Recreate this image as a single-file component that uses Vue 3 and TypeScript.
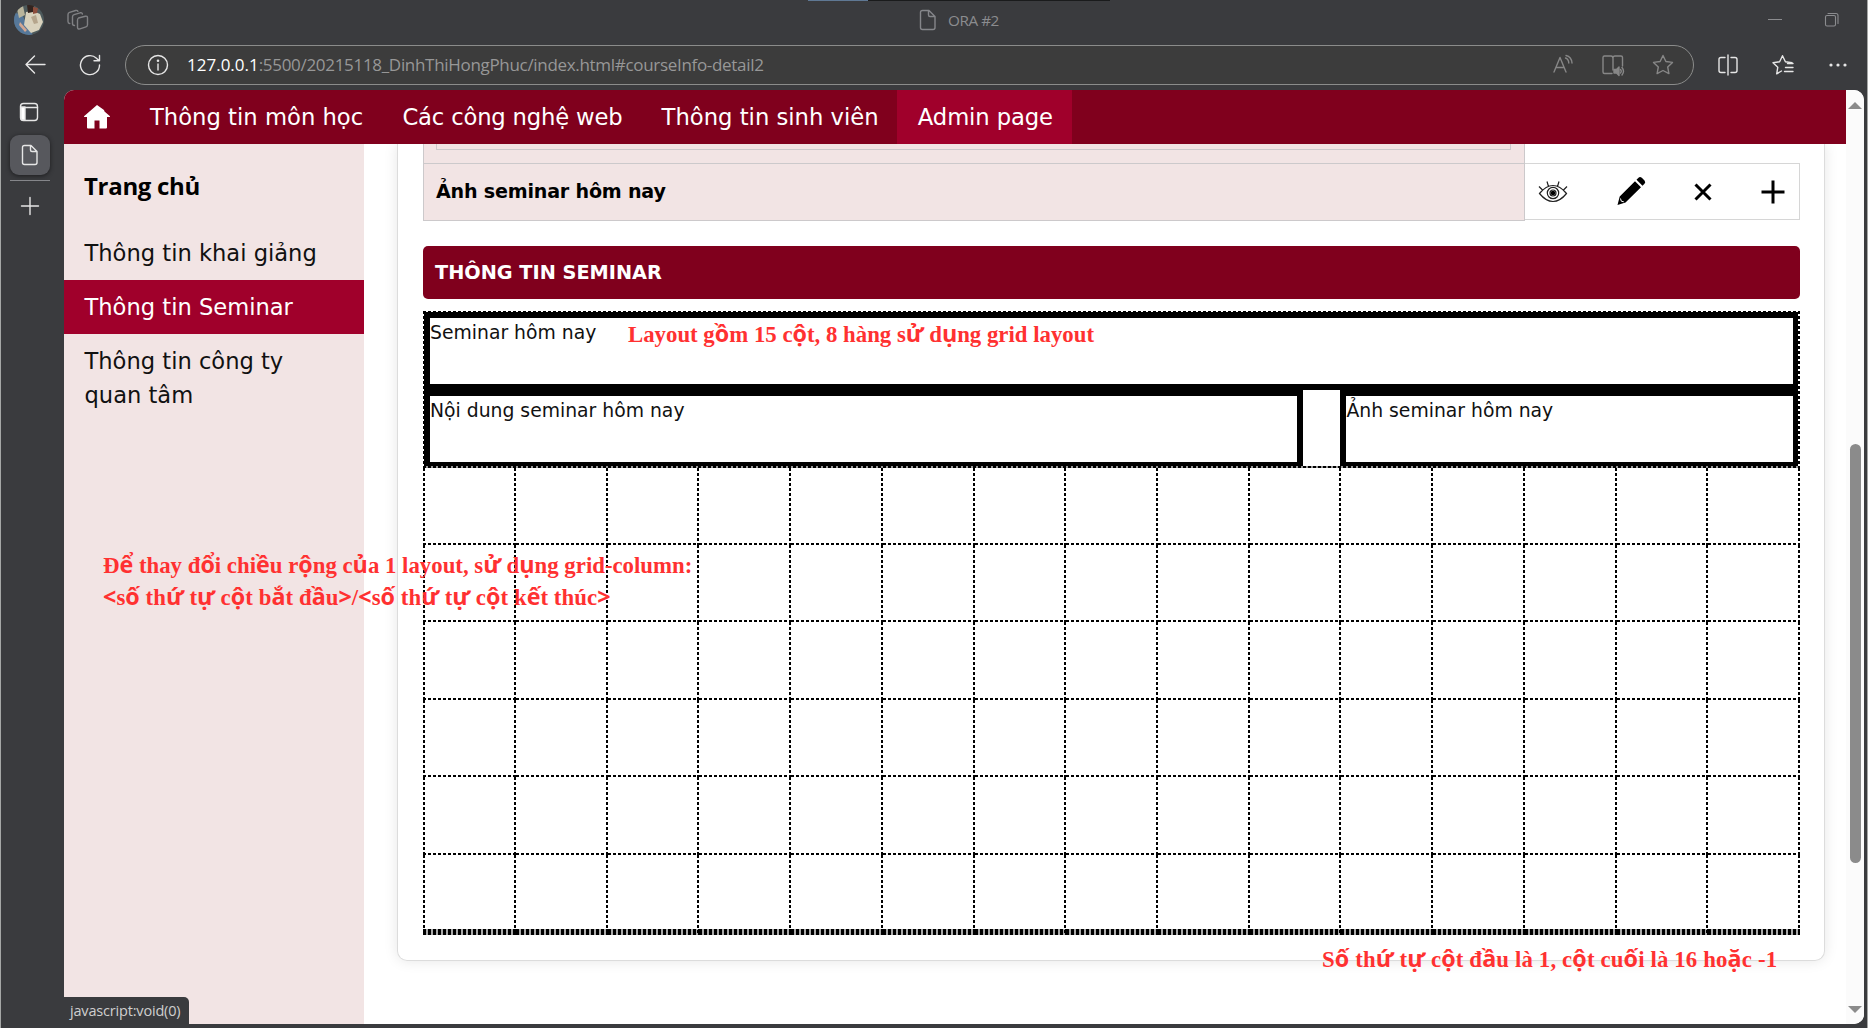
<script setup lang="ts">
interface Run {
  text: string
  plain: boolean
}

const navItems: string[] = ['Thông tin môn học', 'Các công nghệ web', 'Thông tin sinh viên', 'Admin page']
const sideItems: string[] = ['Thông tin khai giảng', 'Thông tin Seminar', 'Thông tin công ty quan tâm']

// Stacked Vietnamese diacritics are set in the sans face, the rest in the serif face.
function runs(line: string): Run[] {
  return line
    .split(/([<>\u01a0-\u01b0\u1ea0-\u1ef9]+)/)
    .filter((t) => t.length > 0)
    .map((text) => ({ text, plain: /[<>\u01a0-\u01b0\u1ea0-\u1ef9]/.test(text) }))
}

const notes = [
  { cls: 'note-a', lines: ['Layout gồm 15 cột, 8 hàng sử dụng grid layout'].map(runs) },
  {
    cls: 'note-b',
    lines: [
      'Để thay đổi chiều rộng của 1 layout, sử dụng grid-column:',
      '<số thứ tự cột bắt đầu>/<số thứ tự cột kết thúc>',
    ].map(runs),
  },
  { cls: 'note-c', lines: ['Số thứ tự cột đầu là 1, cột cuối là 16 hoặc -1'].map(runs) },
]
</script>

<template>
  <div class="window">
    <header class="titlebar">
      <svg class="avatar" viewBox="0 0 30 30">
        <defs><clipPath id="face"><circle cx="15" cy="15" r="15" /></clipPath></defs>
        <g clip-path="url(#face)">
          <rect width="30" height="30" fill="#4d5a5c" />
          <path d="M0 8l8 1 4 9 7 12H3L0 22z" fill="#56789a" />
          <path d="M3 4l6-3 2 9-6 3z" fill="#b9b59c" />
          <path d="M12 7l7-1 7 3 3 8-4 8-8 3-7-8z" fill="#d9d2bd" />
          <path d="M13 0h7l-1 7-5 1z" fill="#33241f" />
          <path d="M19 2l5 1-1 5-4 1z" fill="#8d4d3c" />
          <path d="M6 17l7 8-2 2-6-7z" fill="#d3a792" />
          <path d="M17 12l3 7 4-1-2-8z" fill="#b5a58c" />
        </g>
      </svg>
      <svg class="ic workspaces" viewBox="0 0 24 24">
        <path d="M12.500 10l6.800-1.800q2.200-.4 2.200 1.500v7q0 1.700-1.500 2.200l-6 2q-2.500.6-2.500-1.600v-7q0-1.700 1-2.300zM8.500 17.500q-2-.1-2-2V8.800q0-1.700 1.600-2.200l6-1.800q2-.4 2.300 1.200M3.800 15.500Q2 15.300 2 13.500V6.500q0-1.700 1.600-2.200l6-1.800q1.900-.4 2.300.9" />
      </svg>
      <svg class="ic title-doc" viewBox="0 0 24 24">
        <path d="M6.500 2.500h6.500l6 6V19.500q0 2-2 2H6.500q-2 0-2-2v-15q0-2 2-2zM12.500 2.500v4.500q0 1.500 1.500 1.500h5" />
      </svg>
      <span class="title">ORA #2</span>
      <svg class="ic minimize" viewBox="0 0 24 24"><path d="M5 11.500h14" /></svg>
      <svg class="ic restore" viewBox="0 0 24 24">
        <rect x="5.500" y="7.500" width="10" height="10.500" rx="1.500" />
        <path d="M8 5.500h8q2 0 2 2v8" />
      </svg>
    </header>
    <i class="strip"></i>

    <div class="toolbar">
      <svg class="ic back" viewBox="0 0 24 24"><path d="M22 11.500H3M11.500 3L3 11.500l8.500 8.500" /></svg>
      <svg class="ic reload" viewBox="0 0 24 24"><path d="M21.500 12a9.500 9.500 0 1 1-3-6.800l2.500 2.500M21.500 2.500v5.300h-5.500" /></svg>
      <div class="pill">
        <svg class="ic info" viewBox="0 0 24 24">
          <circle cx="12" cy="12" r="9.500" /><path d="M12 11v6" /><circle cx="12" cy="7.800" r=".6" />
        </svg>
        <span class="url"><b>127.0.0.1</b>:5500/20215118_DinhThiHongPhuc/index.html#courseInfo-detail2</span>
        <svg class="ic dim" viewBox="0 0 24 24">
          <path d="M3 19L9 4.500 15 19M5 14.500h8M14.500 5q3 1 3.300 5M15 2.500q5.500 1.300 6 7.500" />
        </svg>
        <svg class="ic dim gap" viewBox="0 0 24 24">
          <path d="M11 20.500H3.500q-1.500 0-1.500-1.500V4.500q0-1.500 1.500-1.500H10q2 0 2 2.500V17M12 5q0-2 2-2h6q1.500 0 1.500 1.500V13" />
          <path d="M13 16.500h2.500L18 14v8.500L15.500 20H13z" fill="#878787" />
          <path d="M19.500 16.500q1.500 1.700 0 3.500M21 14.500q3 3.700 0 7.500" />
        </svg>
        <svg class="ic dim gap" viewBox="0 0 24 24">
          <path d="M12 2.500l2.900 6 6.600.9-4.800 4.600 1.200 6.600L12 17.500l-5.900 3.100 1.200-6.600-4.800-4.600 6.600-.9z" />
        </svg>
      </div>
      <svg class="ic split" viewBox="0 0 24 24">
        <path d="M9 4.500H5q-2 0-2 2v11q0 2 2 2h4M15 4.500h4q2 0 2 2v11q0 2-2 2h-4M12 2v20" />
      </svg>
      <svg class="ic favs" viewBox="0 0 24 24">
        <path d="M10.500 18l-4.800 2.800 1.100-6.600L2 9.700l6.600-1L11.500 2.700l2.900 6 6.600 1M16.500 10.500h5.500M14.500 14.500h7.500M13.500 18.500h8.500" />
      </svg>
      <svg class="ic more" viewBox="0 0 24 24">
        <g fill="#e6e6e6" stroke="none"><circle cx="5" cy="12" r="1.600" /><circle cx="12" cy="12" r="1.600" /><circle cx="19" cy="12" r="1.600" /></g>
      </svg>
    </div>

    <div class="body">
      <aside class="tabs">
        <svg class="ic tab-icon" viewBox="0 0 24 24">
          <rect x="3.500" y="3.500" width="17" height="17" rx="3" /><path d="M8 7.500h12.500" /><path d="M4 7h4v13H5.500Q4 20 4 18z" fill="#fff" />
        </svg>
        <div class="active-tab">
          <svg class="ic" viewBox="0 0 24 24">
            <path d="M6.500 2.500h6.500l6 6V19.500q0 2-2 2H6.500q-2 0-2-2v-15q0-2 2-2zM12.500 2.500v4.500q0 1.500 1.500 1.500h5" />
          </svg>
        </div>
        <hr />
        <svg class="ic plus-tab" viewBox="0 0 24 24"><path d="M12 3.500v17M3.500 12h17" /></svg>
      </aside>

      <div class="page">
        <div class="site">
          <nav>
            <svg class="home" viewBox="0 0 26 24">
              <path d="M13 0L0 11.300q-.3.700.5.700H3v10.500Q3 23.500 4 23.500h6.500v-8h5v8H22q1 0 1-1V12h2.500q.8 0 .5-.7L20.500 6.400 20 5z" fill="#fff" />
            </svg>
            <a v-for="(n, i) in navItems" :key="n" :class="{ on: i === 3, tight: i === 1 }">{{ n }}</a>
          </nav>
          <div class="columns">
            <aside class="side">
              <h2>Trang chủ</h2>
              <a v-for="(s, i) in sideItems" :key="s" :class="{ on: i === 1 }">{{ s }}</a>
            </aside>
            <main>
              <section class="card">
                <div class="prev"><div class="prev-box"></div></div>
                <div class="row">
                  <div class="label">Ảnh seminar hôm nay</div>
                  <div class="actions">
                    <svg class="eye" viewBox="0 0 30 24">
                      <g fill="none" stroke="#222" stroke-width="1.200">
                        <path d="M1.500 13.500Q8 5.500 15 5.500t13.500 8Q22 21.500 15 21.500T1.500 13.500zM4.500 10L1 6.500M10.500 6.500L9 1.500M19.500 6.500L21 1.500M25.500 10L29 6.500" />
                        <circle cx="15" cy="13" r="5.700" /><circle cx="15" cy="13" r="3" />
                      </g>
                      <circle cx="15" cy="13" r="2.300" />
                    </svg>
                    <svg class="pencil" viewBox="0 0 30 30">
                      <path d="M19 5.200l6 6L9.500 26.500l-8 2.500 2.200-8.500zM20.500 3.700l2-2q1.500-1.500 3.300.1l2.700 2.700q1.500 1.700 0 3.200l-2 2z" />
                      <path d="M4.500 22.500l.8 2.700 2.500.6" fill="none" stroke="#fff" stroke-width="1" />
                    </svg>
                    <svg class="cross" viewBox="0 0 20 20"><path d="M2.500 2.500l15 15M17.500 2.500l-15 15" /></svg>
                    <svg class="add" viewBox="0 0 24 24"><path d="M12 .5v23M.5 12h23" /></svg>
                  </div>
                </div>
                <h3>THÔNG TIN SEMINAR</h3>
                <div class="grid">
                  <div class="box top">Seminar hôm nay</div>
                  <div class="box content">Nội dung seminar hôm nay</div>
                  <div class="box image">Ảnh seminar hôm nay</div>
                  <div v-for="c in 90" :key="c" class="cell" :class="{ first: c % 15 === 1, last: c > 75 }"></div>
                </div>
              </section>
            </main>
          </div>
        </div>
        <div class="scroll">
          <i class="up"></i>
          <div class="track"><i class="thumb"></i></div>
          <i class="down"></i>
        </div>
        <div class="status">javascript:void(0)</div>
      </div>
    </div>

    <div v-for="n in notes" :key="n.cls" class="note" :class="n.cls">
      <div v-for="(l, i) in n.lines" :key="i"><span v-for="(r, j) in l" :key="j" :class="{ plain: r.plain }">{{ r.text }}</span></div>
    </div>
  </div>
</template>

<style>
body {
  margin: 0;
  overflow: hidden;
}
</style>

<style scoped>
* {
  box-sizing: border-box;
}
.window {
  position: relative;
  width: 1868px;
  height: 1028px;
  overflow: hidden;
  background: #3a3b3e;
  border-left: 1px solid #a5a7a6;
  border-right: 1px solid #a5a7a6;
  display: flex;
  flex-direction: column;
  font-family: 'DejaVu Sans', sans-serif;
}
.ic {
  width: 24px;
  height: 24px;
  flex: none;
  fill: none;
  stroke: #e6e6e6;
  stroke-width: 1.4;
  stroke-linecap: round;
  stroke-linejoin: round;
}
.titlebar {
  height: 40px;
  display: flex;
  align-items: center;
  padding-left: 13px;
}
.avatar { width: 30px; height: 30px; }
.workspaces { margin-left: 22px; stroke: #808184; }
.title-doc { margin-left: 826px; stroke: #85868a; }
.title {
  margin-left: 8px;
  width: 70px;
  font: 15.3px 'Open Sans', sans-serif;
  color: #8b8c8f;
  letter-spacing: -0.45px;
}
.minimize { margin-left: 745px; stroke: #8b8c8f; stroke-width: 1; stroke-linecap: butt; }
.restore { margin-left: 33px; stroke: #8b8c8f; stroke-width: 1.1; }
.strip {
  position: absolute;
  left: 807px;
  top: 0;
  width: 302px;
  height: 1px;
  background: linear-gradient(to right, #5f7894 60px, #1a1b1c 60px);
}
.toolbar {
  height: 50px;
  display: flex;
  align-items: center;
  padding-left: 22px;
}
.reload { margin-left: 31px; }
.pill {
  margin-left: 23px;
  width: 1569px;
  height: 40px;
  border: 1px solid #8b8c8b;
  border-radius: 20px;
  background: #3c3c3c;
  display: flex;
  align-items: center;
  padding-left: 20px;
}
.url {
  margin-left: 17px;
  padding-bottom: 2px;
  width: 1364px;
  font: 17px 'Open Sans', sans-serif;
  color: #979797;
  letter-spacing: -0.31px;
  white-space: nowrap;
}
.url b { font-weight: 400; color: #fff; letter-spacing: 0; }
.dim { stroke: #878787; }
.gap { margin-left: 26px; }
.split { margin-left: 22px; }
.favs { margin-left: 31px; }
.more { margin-left: 31px; }
.body {
  height: 934px;
  display: flex;
}
.tabs {
  width: 63px;
  display: flex;
  flex-direction: column;
  padding-left: 9px;
}
.tab-icon { margin: 10px 0 11px 7px; }
.active-tab {
  width: 40px;
  height: 40px;
  border-radius: 9px;
  background: #57585d;
  box-shadow: 0 1px 4px #1d1d1f;
  display: flex;
  align-items: center;
  justify-content: center;
}
.tabs hr { width: 40px; margin: 5px 0 0; border: 0; border-top: 1px solid #85868a; }
.plus-tab { margin: 13px 0 0 8px; }
.page {
  position: relative;
  width: 1800px;
  height: 934px;
  display: flex;
  overflow: hidden;
  border-radius: 10px 10px 10px 0;
  background: #fff;
}
.site { width: 1782px; }
nav {
  height: 54px;
  display: flex;
  align-items: center;
  background: #80001d;
  color: #fff;
  font-size: 22.7px;
  white-space: nowrap;
}
.home { width: 26px; height: 24px; margin: 0 19px 0 20px; }
nav a {
  height: 54px;
  line-height: 54px;
  padding: 0 19px 0 21px;
  margin-right: -0.8px;
}
nav a.tight { letter-spacing: -0.18px; }
nav a.on { background: #a0002b; width: 175px; letter-spacing: -0.12px; }
.columns { display: flex; height: 880px; }
.side {
  width: 300px;
  background: #f2e4e4;
  font-size: 22.6px;
  line-height: 34px;
  color: #111;
}
.side h2 {
  margin: 0;
  padding: 25px 0 23px 20px;
  font: bold 24px/34px 'Open Sans', sans-serif;
  letter-spacing: -0.3px;
  color: #000;
}
.side a { display: block; padding: 10px 20px 10px 20.5px; width: 300px; }
.side a:last-child { padding-right: 50px; }
.side a.on { background: #a0002b; color: #fff; }
main { padding-left: 33px; overflow: hidden; width: 1482px; }
.card {
  width: 1428px;
  height: 817px;
  border: 1px solid #dcdcdc;
  border-top: 0;
  border-radius: 0 0 10px 10px;
  box-shadow: 0 0 14px rgba(0, 0, 0, 0.1);
  padding-left: 25px;
}
.prev {
  height: 19px;
  width: 1102px;
  background: #f2e4e4;
  border: 1px solid #ccc9cb;
  border-width: 0 1px;
  padding-left: 12px;
}
.prev-box { width: 1075px; height: 6px; border: 1px solid #ccc9cb; border-top: 0; }
.row { display: flex; height: 58px; }
.label {
  width: 1102px;
  height: 58px;
  border: 1px solid #ccc9cb;
  background: #f2e4e4;
  padding-left: 12px;
  font-weight: bold;
  font-size: 19.1px;
  letter-spacing: -0.2px;
  line-height: 56px;
}
.actions {
  width: 275px;
  height: 57px;
  border: 1px solid #d6d6d6;
  border-left: 0;
  display: flex;
  align-items: center;
}
.eye { width: 30px; height: 24px; margin-left: 13px; }
.pencil { width: 30px; height: 30px; margin: 0 0 1px 48px; }
.cross { width: 20px; height: 20px; margin-left: 47px; }
.add { width: 24px; height: 24px; margin-left: 48px; }
.cross path, .add path { stroke: #000; stroke-width: 3; fill: none; }
h3 {
  margin: 25px 0 12px;
  width: 1377px;
  height: 53px;
  border-radius: 5px;
  background: #80001d;
  color: #fff;
  padding-left: 12px;
  font-size: 19.3px;
  line-height: 53px;
}
.grid {
  position: relative;
  width: 1377px;
  display: grid;
  grid-template-columns: 93px repeat(14, 1fr);
  grid-template-rows: 79px 77.5px 77px repeat(4, 77.5px) 80.5px;
  font-size: 18.8px;
  line-height: 29px;
}
.grid::before {
  content: '';
  position: absolute;
  inset: 0;
  pointer-events: none;
  background:
    repeating-linear-gradient(to right, #000 0 3px, #fff 3px 5px) 0 0 / 100% 1px no-repeat,
    repeating-linear-gradient(to bottom, #000 0 3px, #fff 3px 5px) 0 0 / 1px 157px no-repeat,
    repeating-linear-gradient(to bottom, #000 0 3px, #fff 3px 5px) 100% 0 / 2px 157px no-repeat,
    repeating-linear-gradient(to right, #000 0 3px, #999 3px 5px) 0 155px / 100% 2px no-repeat;
}
.box { border: 6px solid #000; color: #111; white-space: nowrap; }
.top { grid-column: 1 / 16; margin: 1px 1px 0; }
.content { grid-column: 1 / 11; width: 879px; margin-left: 1px; }
.image { grid-column: 11 / 16; margin: 0 1px 0 -1px; }
.cell {
  background:
    repeating-linear-gradient(to bottom, #000 0 3px, transparent 3px 5px) 100% 0 / 2px 100% no-repeat,
    repeating-linear-gradient(to right, #000 0 3px, transparent 3px 5px) 0 100% / 100% 2px no-repeat;
}
.cell.first {
  background:
    repeating-linear-gradient(to bottom, #000 0 3px, transparent 3px 5px) 0 0 / 2px 100% no-repeat,
    repeating-linear-gradient(to bottom, #000 0 3px, transparent 3px 5px) 100% 0 / 2px 100% no-repeat,
    repeating-linear-gradient(to right, #000 0 3px, transparent 3px 5px) 0 100% / 100% 2px no-repeat;
}
.cell.last {
  background:
    repeating-linear-gradient(to bottom, #000 0 3px, transparent 3px 5px) 100% 0 / 2px 100% no-repeat,
    repeating-linear-gradient(to right, #000 0 3px, #aaa 3px 5px) 0 100% / 100% 6px no-repeat;
}
.cell.first.last {
  background:
    repeating-linear-gradient(to bottom, #000 0 3px, transparent 3px 5px) 0 0 / 2px 100% no-repeat,
    repeating-linear-gradient(to bottom, #000 0 3px, transparent 3px 5px) 100% 0 / 2px 100% no-repeat,
    repeating-linear-gradient(to right, #000 0 3px, #aaa 3px 5px) 0 100% / 100% 6px no-repeat;
}
.scroll {
  width: 18px;
  background: #fbfbfb;
  display: flex;
  flex-direction: column;
  align-items: center;
  padding: 12px 0 11px;
}
.up, .down { border: 7px solid transparent; border-top: 0; border-bottom: 7px solid #8b8b8b; }
.down { transform: rotate(180deg); }
.track { flex: 1; padding-top: 335px; }
.thumb { display: block; width: 11px; height: 419px; border-radius: 6px; background: #8b8b8b; }
.status {
  position: absolute;
  left: 0;
  bottom: 0;
  width: 125px;
  height: 27px;
  background: #3a3b3e;
  border-radius: 0 5px 0 0;
  color: #cfcfcf;
  padding-left: 6px;
  font: 14.5px/27px 'Open Sans', sans-serif;
  letter-spacing: -0.18px;
  white-space: nowrap;
}
.note {
  position: absolute;
  color: #ff3131;
  font: bold 22.8px/32px 'Liberation Serif', serif;
  white-space: nowrap;
}
.plain { font-family: 'Open Sans', sans-serif; font-size: 23.3px; line-height: 20px; }
.note-a { left: 627px; top: 319px; }
.note-b { left: 102px; top: 550px; }
.note-b div:last-child { letter-spacing: 0.05px; }
.note-c { left: 1321px; top: 944px; letter-spacing: 0.14px; }
</style>
